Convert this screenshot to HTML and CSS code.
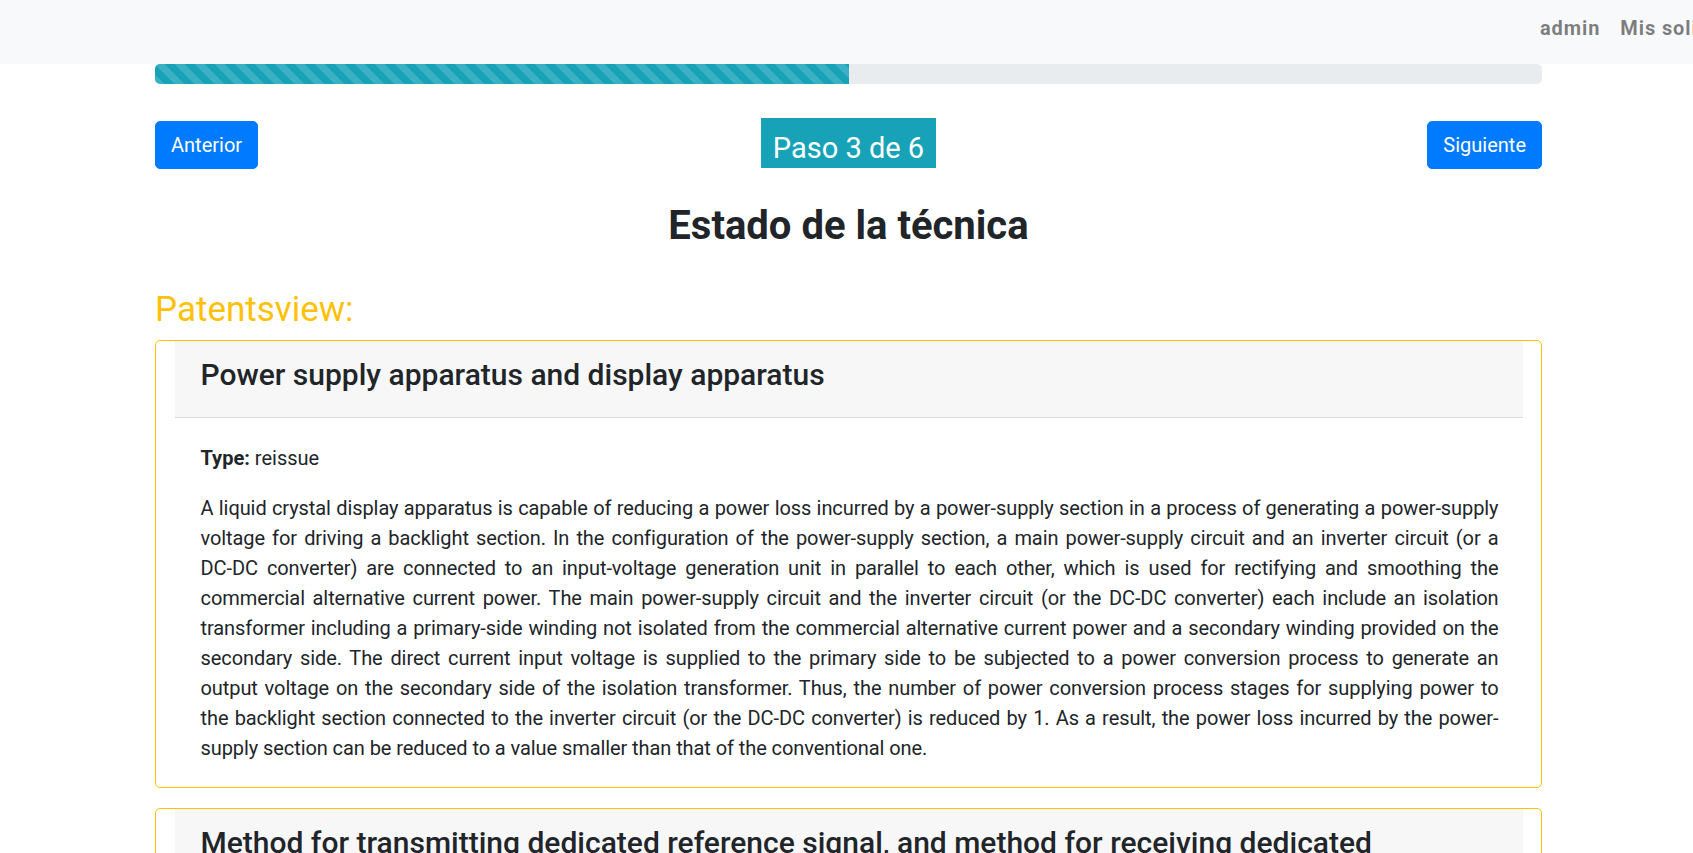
FILE: index.html
```html
<!DOCTYPE html>
<html lang="es">
<head>
<meta charset="utf-8">
<title>Estado de la técnica</title>
<link rel="stylesheet" href="styles.css">
</head>
<body>
<nav class="navbar">
  <div class="navbar-inner">
    <ul class="nav-list">
      <li><a class="nav-link" href="#">admin</a></li>
      <li><a class="nav-link" href="#">Mis solicitudes</a></li>
      <li><a class="nav-link" href="#">Salir</a></li>
    </ul>
  </div>
</nav>

<main class="container">
  <div class="progress">
    <div class="progress-bar" style="width: 50%"></div>
  </div>

  <div class="steps">
    <a class="btn btn-prev" href="#">Anterior</a>
    <span class="step-badge">Paso 3 de 6</span>
    <a class="btn btn-next" href="#">Siguiente</a>
  </div>

  <h2 class="page-title">Estado de la técnica</h2>

  <h3 class="source-title">Patentsview:</h3>

  <div class="card">
    <div class="card-header">
      <h4 class="card-title">Power supply apparatus and display apparatus</h4>
    </div>
    <div class="card-body">
      <p><b>Type:</b> reissue</p>
      <p class="abstract">A liquid crystal display apparatus is capable of reducing a power loss incurred by a power-supply section in a process of generating a power-supply voltage for driving a backlight section. In the configuration of the power-supply section, a main power-supply circuit and an inverter circuit (or a <span class="nowrap">DC-DC</span> converter) are connected to an input-voltage generation unit in parallel to each other, which is used for rectifying and smoothing the commercial alternative current power. The main power-supply circuit and the inverter circuit (or the <span class="nowrap">DC-DC</span> converter) each include an isolation transformer including a primary-side winding not isolated from the commercial alternative current power and a secondary winding provided on the secondary side. The direct current input voltage is supplied to the primary side to be subjected to a power conversion process to generate an <span class="nowrap">output voltage</span> on the secondary side of the isolation transformer. Thus, the number of power conversion process stages for supplying power to <span class="nowrap">the backlight</span> section connected to the inverter circuit (or the <span class="nowrap">DC-DC</span> converter) is reduced by 1. As a result, the power loss incurred by the power-<span class="nowrap">supply section</span> can be reduced to a value smaller than that of the conventional one.</p>
    </div>
  </div>

  <div class="card">
    <div class="card-header">
      <h4 class="card-title">Method for transmitting dedicated reference signal, and method for receiving dedicated reference signal</h4>
    </div>
    <div class="card-body">
      <p><b>Type:</b> utility</p>
    </div>
  </div>
</main>
</body>
</html>
```
FILE: styles.css
```css
html {
  scrollbar-width: none;
}
html::-webkit-scrollbar {
  display: none;
}
body {
  margin: 0;
  padding-left: 4px;
  font-family: Roboto, "Liberation Sans", Arial, sans-serif;
  font-size: 20px;
  line-height: 30px;
  color: #212529;
  background: #fff;
  overflow-x: hidden;
}

/* navbar */
.navbar {
  margin-left: -4px;
  height: 64px;
  box-sizing: border-box;
  padding-top: 13px;
  background: #f8f9fa;
  overflow: hidden;
}
.navbar-inner {
  width: 1387px;
  margin: 0 auto;
}
.nav-list {
  list-style: none;
  margin: 0 0 0 100%;
  padding: 0;
  display: flex;
  gap: 20px;
  white-space: nowrap;
}
.nav-link {
  display: block;
  font-weight: 700;
  letter-spacing: 0.9px;
  color: rgba(0, 0, 0, 0.5);
  text-decoration: none;
}

/* container */
.container {
  width: 1387px;
  margin: 0 auto;
}

/* progress */
.progress {
  height: 20px;
  background: #e9ecef;
  border-radius: 5px;
  overflow: hidden;
  display: flex;
}
.progress-bar {
  height: 100%;
  background-color: #17a2b8;
  background-image: linear-gradient(45deg, rgba(255,255,255,.15) 25%, transparent 25%, transparent 50%, rgba(255,255,255,.15) 50%, rgba(255,255,255,.15) 75%, transparent 75%, transparent);
  background-size: 20px 20px;
}

/* steps row */
.steps {
  margin-top: 33px;
  display: grid;
  grid-template-columns: 1fr auto 1fr;
  align-items: start;
}
.btn {
  margin-top: 4px;
  display: inline-block;
  padding: 8px 15px;
  line-height: 30px;
  font-size: 20px;
  color: #fff;
  background: #007bff;
  border: 1px solid #007bff;
  border-radius: 5px;
  text-decoration: none;
}
.btn-prev {
  justify-self: start;
}
.btn-next {
  justify-self: end;
}
.step-badge {
  display: inline-block;
  margin-top: 1px;
  height: 50px;
  box-sizing: border-box;
  padding: 10px 12px 0;
  line-height: 40px;
  font-size: 29px;
  color: #fff;
  background: #17a2b8;
  white-space: nowrap;
}

/* headings */
.page-title {
  margin: 33px 0 39px;
  text-align: center;
  font-size: 40px;
  line-height: 48px;
  font-weight: 700;
  color: #212529;
}
.source-title {
  margin: 0 0 9px;
  font-size: 35px;
  line-height: 42px;
  font-weight: 400;
  color: #ffc107;
}

/* cards */
.card {
  border: 1px solid #ffc107;
  border-radius: 5px;
  padding: 0 18.5px;
  margin-bottom: 20px;
  background: #fff;
}
.card-header {
  background: #f7f7f7;
  border-bottom: 1px solid #dcdcdc;
  padding: 16px 26px 14px;
}
.card-title {
  margin: 0 0 10px;
  font-size: 30px;
  line-height: 36px;
  font-weight: 500;
  color: #212529;
}
.card-body {
  padding: 25px 24px 24px 26px;
}
.card-body p {
  margin: 0 0 20px;
}
.card-body p:last-child {
  margin-bottom: 0;
}
.abstract {
  text-align: justify;
  letter-spacing: -0.08px;
}
.nowrap {
  white-space: nowrap;
}
```
